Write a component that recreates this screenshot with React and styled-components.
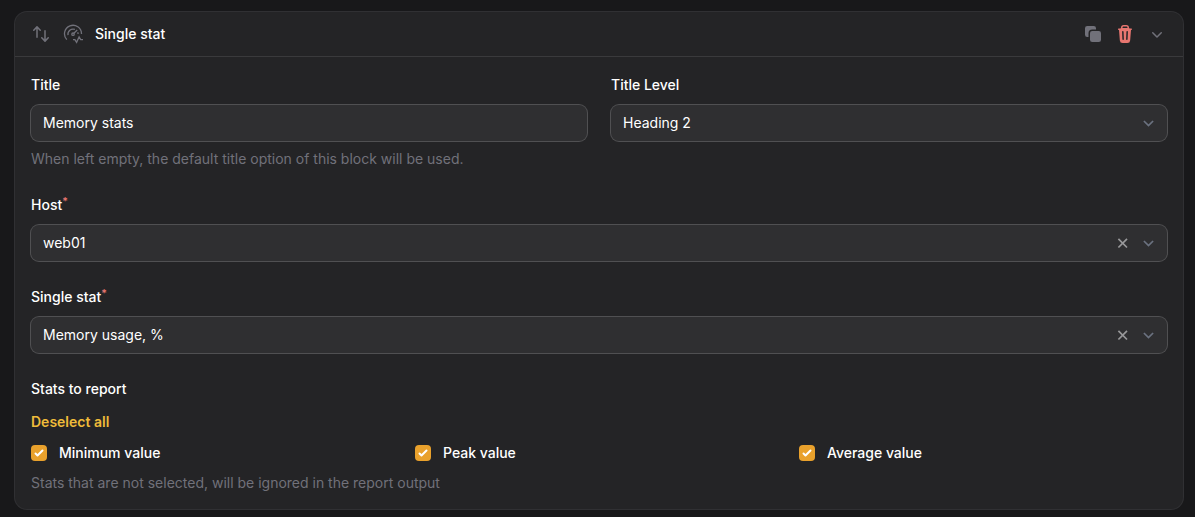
import React, { useState } from 'react';
import styled, { createGlobalStyle, css } from 'styled-components';
import {
  HiMiniArrowsUpDown,
  HiMiniSquare2Stack,
  HiMiniTrash,
  HiMiniChevronDown,
} from 'react-icons/hi2';

const colors = {
  page: '#18181a',
  card: '#242426',
  input: '#2f2f31',
  ring: '#3a3a3c',
  cardRing: '#303033',
  inputRing: '#505052',
  muted: '#71717a',
  danger: '#e87670',
  primary: '#e9a12c',
  link: '#f0bc3a',
};

const GlobalStyle = createGlobalStyle`
  *, *::before, *::after {
    box-sizing: border-box;
  }

  body {
    margin: 0;
    background: ${colors.page};
    color: #fff;
    font-family: Inter, sans-serif;
    font-size: 14px;
    line-height: 24px;
    overflow: hidden;
  }
`;

const Page = styled.main`
  padding: 12px 12px 0 15px;
`;

const Card = styled.section`
  margin-bottom: 8px;
  width: 1168px;
  border-radius: 12px;
  background: ${colors.card};
  box-shadow: 0 0 0 1px ${colors.cardRing};
`;

const Header = styled.header`
  display: flex;
  align-items: center;
  gap: 12px;
  height: 45px;
  padding: 0 16px;
  border-bottom: 1px solid ${colors.ring};
`;

const Heading = styled.h3`
  flex: 1;
  margin: 0;
  font-size: 14px;
  font-weight: 500;
`;

const IconButton = styled.button`
  display: flex;
  padding: 0;
  border: 0;
  background: none;
  color: ${(props) => props.$color || colors.muted};
  cursor: pointer;
`;

const Body = styled.div`
  display: flex;
  flex-direction: column;
  gap: 24px;
  padding: 16px;
`;

const Columns = styled.div`
  display: grid;
  grid-template-columns: repeat(${(props) => props.$count}, minmax(0, 1fr));
  gap: ${(props) => props.$gap};
`;

const FieldWrapper = styled.div`
  display: grid;
  align-content: start;
  gap: 8px;
`;

const Label = styled.label`
  height: 24px;
  font-weight: 500;
`;

const Required = styled.sup`
  color: ${colors.danger};
  font-size: 10.5px;
  font-weight: 600;
  line-height: 0;
  position: relative;
  top: -0.5em;
  vertical-align: baseline;
`;

const controlStyles = css`
  height: 36px;
  border-radius: 8px;
  background: ${colors.input};
  box-shadow: 0 0 0 1px ${colors.inputRing};
`;

const TextInput = styled.input`
  ${controlStyles}
  width: 100%;
  padding: 0 12px 1px;
  border: 0;
  outline: 0;
  color: #fff;
  font: inherit;
`;

const SelectBox = styled.div`
  ${controlStyles}
  display: flex;
  align-items: center;
  gap: 14px;
  padding: 0 13px 0 12px;
`;

const Value = styled.span`
  flex: 1;
`;

const Helper = styled.p`
  margin: 0;
  color: ${colors.muted};
  line-height: 20px;
`;

const LinkButton = styled.button`
  justify-self: start;
  height: 24px;
  padding: 2px 0 0;
  border: 0;
  background: none;
  color: ${colors.link};
  font: inherit;
  font-weight: 600;
  line-height: 22px;
  cursor: pointer;
`;

const Option = styled.label`
  display: flex;
  align-items: center;
  gap: 12px;
  font-weight: 500;
`;

const Checkbox = styled.span`
  display: flex;
  width: 16px;
  height: 16px;
  border-radius: 4px;
  background: ${colors.primary};
`;

const GaugeIcon = () => (
  <svg width="20" height="20" viewBox="0 0 20 20" fill="none" stroke="currentColor" strokeWidth="1.3">
    <path d="M3.8 15.6A8.5 8.5 0 1 1 18.5 9.9" />
    <path d="M5 11.2A5.2 5.2 0 0 1 11.9 5.4" />
    <path d="M14.7 8.2A5.2 5.2 0 0 1 15.1 10" />
    <circle cx="10" cy="10.2" r="1.2" />
    <path d="M10.9 9.3 14.2 6" />
    <path d="M10 15.6h1.9l1.7 2.7 2.5-5.4 1.6 2.7H20" />
  </svg>
);

const ClearIcon = () => (
  <svg width="12" height="12" viewBox="0 0 12 12" stroke="#98989a" strokeWidth="1.7">
    <path d="M2.4 1.9l8.6 8.6M11 1.9l-8.6 8.6" />
  </svg>
);

const CaretIcon = () => (
  <svg width="12" height="12" viewBox="0 0 12 12" fill="none" stroke="#6b7280" strokeWidth="1.7">
    <path d="M1.9 4l4.6 4.6L11.1 4" />
  </svg>
);

const CheckIcon = () => (
  <svg width="16" height="16" viewBox="0 0 16 16" fill="#fff">
    <path d="M12.207 4.793a1 1 0 0 1 0 1.414l-5 5a1 1 0 0 1-1.414 0l-2-2a1 1 0 0 1 1.414-1.414L6.5 9.086l4.293-4.293a1 1 0 0 1 1.414 0z" />
  </svg>
);

const Field = ({ label, required, helper, children }) => (
  <FieldWrapper>
    <Label>
      {label}
      {required && <Required>*</Required>}
    </Label>
    {children}
    {helper && <Helper>{helper}</Helper>}
  </FieldWrapper>
);

const Select = ({ value, clearable }) => (
  <SelectBox>
    <Value>{value}</Value>
    {clearable && <ClearIcon />}
    <CaretIcon />
  </SelectBox>
);

const stats = ['Minimum value', 'Peak value', 'Average value'];

export default function App() {
  const [title, setTitle] = useState('Memory stats');

  return (
    <>
      <GlobalStyle />
      <Page>
        <Card>
          <Header>
            <IconButton aria-label="Move">
              <HiMiniArrowsUpDown size={20} />
            </IconButton>
            <IconButton as="span">
              <GaugeIcon />
            </IconButton>
            <Heading>Single stat</Heading>
            <IconButton aria-label="Clone">
              <HiMiniSquare2Stack size={20} />
            </IconButton>
            <IconButton aria-label="Delete" $color={colors.danger}>
              <HiMiniTrash size={20} />
            </IconButton>
            <IconButton aria-label="Collapse">
              <HiMiniChevronDown size={20} />
            </IconButton>
          </Header>
          <Body>
            <Columns $count={2} $gap="24px">
              <Field label="Title" helper="When left empty, the default title option of this block will be used.">
                <TextInput value={title} onChange={(e) => setTitle(e.target.value)} />
              </Field>
              <Field label="Title Level">
                <Select value="Heading 2" />
              </Field>
            </Columns>
            <Field label="Host" required>
              <Select value="web01" clearable />
            </Field>
            <Field label="Single stat" required>
              <Select value="Memory usage, %" clearable />
            </Field>
            <Field label="Stats to report" helper="Stats that are not selected, will be ignored in the report output">
              <LinkButton>Deselect all</LinkButton>
              <Columns $count={3} $gap="16px">
                {stats.map((stat) => (
                  <Option key={stat}>
                    <Checkbox>
                      <CheckIcon />
                    </Checkbox>
                    {stat}
                  </Option>
                ))}
              </Columns>
            </Field>
          </Body>
        </Card>
      </Page>
    </>
  );
}
